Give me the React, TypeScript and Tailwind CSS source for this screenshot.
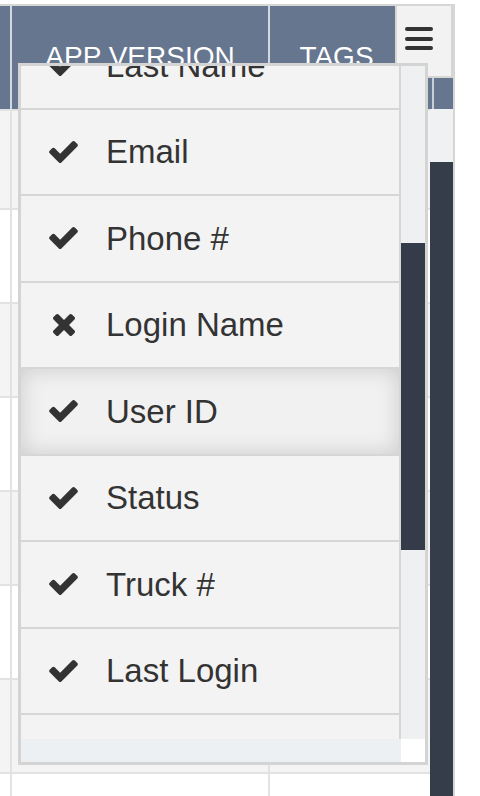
import React from "react";

const HEADER_BLUE = "bg-[#67768f]";

const CheckIcon = () => (
  <svg viewBox="121 334 1550 1188" className="h-[22px] w-[29px] fill-[#333333]">
    <path d="M1671 566q0 40-28 68l-724 724-136 136q-28 28-68 28t-68-28l-136-136-362-362q-28-28-28-68t28-68l136-136q28-28 68-28t68 28l294 295 656-657q28-28 68-28t68 28l136 136q28 28 28 68z" />
  </svg>
);

const TimesIcon = () => (
  <svg viewBox="110 366 1188 1188" className="h-[22px] w-[22px] fill-[#333333]">
    <path d="M1298 1322q0 40-28 68l-136 136q-28 28-68 28t-68-28l-294-294-294 294q-28 28-68 28t-68-28l-136-136q-28-28-28-68t28-68l294-294-294-294q-28-28-28-68t28-68l136-136q28-28 68-28t68 28l294 294 294-294q28-28 68-28t68 28l136 136q28 28 28 68t-28 68l-294 294 294 294q28 28 28 68z" />
  </svg>
);

const columns = [
  { label: "Last Name", on: true },
  { label: "Email", on: true },
  { label: "Phone #", on: true },
  { label: "Login Name", on: false },
  { label: "User ID", on: true, hover: true },
  { label: "Status", on: true },
  { label: "Truck #", on: true },
  { label: "Last Login", on: true },
];

const bodyRows = [101, 94, 94, 94, 94, 94, 94, 94];

const App = () => {
  return (
    <div className="relative h-[796px] w-[480px] overflow-hidden bg-white font-['Liberation_Sans',Arial,sans-serif]">
      {/* Grid behind the menu */}
      <div className="pt-[4px]">
        <div className="w-[455px] border-t-2 border-r-2 border-[#d6d6d6]">
          {/* Header */}
          <div className="flex h-[103px]">
            <div className={`w-[10px] ${HEADER_BLUE}`} />
            <div className="w-[2px] bg-[#d3d7de]" />
            <div className={`flex w-[256px] justify-center pt-[37px] ${HEADER_BLUE}`}>
              <span className="text-[28px] leading-none text-white">APP VERSION</span>
            </div>
            <div className="w-[2px] bg-[#d3d7de]" />
            <div className={`flex w-[125px] justify-center pl-[8px] pt-[37px] ${HEADER_BLUE}`}>
              <span className="text-[28px] leading-none text-white">TAGS</span>
            </div>
            <div className="flex w-[58px] flex-col">
              <div className="flex h-[72px] flex-col gap-[5.5px] border-x-2 border-b-2 border-[#d6d6d6] bg-[#f2f2f2] pl-[8px] pt-[21px]">
                <div className="h-[4px] w-[28px] rounded-full bg-[#333333]" />
                <div className="h-[4px] w-[28px] rounded-full bg-[#333333]" />
                <div className="h-[4px] w-[28px] rounded-full bg-[#333333]" />
              </div>
              <div className="flex flex-1">
                <div className={`w-[37px] ${HEADER_BLUE}`} />
                <div className="w-[2px] bg-[#c9ced6]" />
                <div className={`flex-1 ${HEADER_BLUE}`} />
              </div>
            </div>
          </div>

          {/* Body */}
          <div className="flex">
            <div className="w-[430px]">
              {bodyRows.map((h, i) => (
                <div
                  key={i}
                  style={{ height: h }}
                  className={`flex border-b-2 border-[#e2e2e2] ${
                    i % 2 === 0 ? "bg-[#f4f4f4]" : "bg-white"
                  } ${i === 0 ? "border-t-2" : ""}`}
                >
                  <div className="w-[10px]" />
                  <div className="w-[2px] bg-[#e2e2e2]" />
                  <div className="w-[256px]" />
                  <div className="w-[2px] bg-[#e2e2e2]" />
                  <div className="flex-1" />
                </div>
              ))}
            </div>
            <div className="flex h-[700px] w-[23px] flex-col bg-[#f0f1f3]">
              <div className="mt-[53px] flex-1 bg-[#353c4a]" />
            </div>
          </div>
        </div>
      </div>

      {/* Column chooser menu */}
      <div className="absolute left-[18px] top-[63px] flex h-[702px] w-[410px] flex-col border-[3px] border-[#d4d4d4] bg-[#f3f3f3]">
        <div className="flex h-[673px]">
          <div className="w-[380px] overflow-hidden border-r-2 border-[#d6d6d6]">
            <div className="-mt-[43px]">
              {columns.map((c) => (
                <div
                  key={c.label}
                  className={`flex h-[86.5px] items-center border-b-2 border-[#d6d6d6] pl-[28px] ${
                    c.hover
                      ? "bg-[#f1f1f1] shadow-[inset_0_0_22px_rgba(0,0,0,0.16)]"
                      : ""
                  }`}
                >
                  <div className="flex w-[29px] justify-center">
                    {c.on ? <CheckIcon /> : <TimesIcon />}
                  </div>
                  <span className="ml-[28px] text-[33px] text-[#333333]">{c.label}</span>
                </div>
              ))}
            </div>
          </div>
          <div className="flex w-[24px] flex-col bg-[#eff0f2]">
            <div className="mt-[177px] h-[307px] bg-[#353c49]" />
          </div>
        </div>
        <div className="flex h-[23px]">
          <div className="w-[380px] bg-[#edf0f3]" />
          <div className="flex-1 bg-white" />
        </div>
      </div>
    </div>
  );
};

export default App;
